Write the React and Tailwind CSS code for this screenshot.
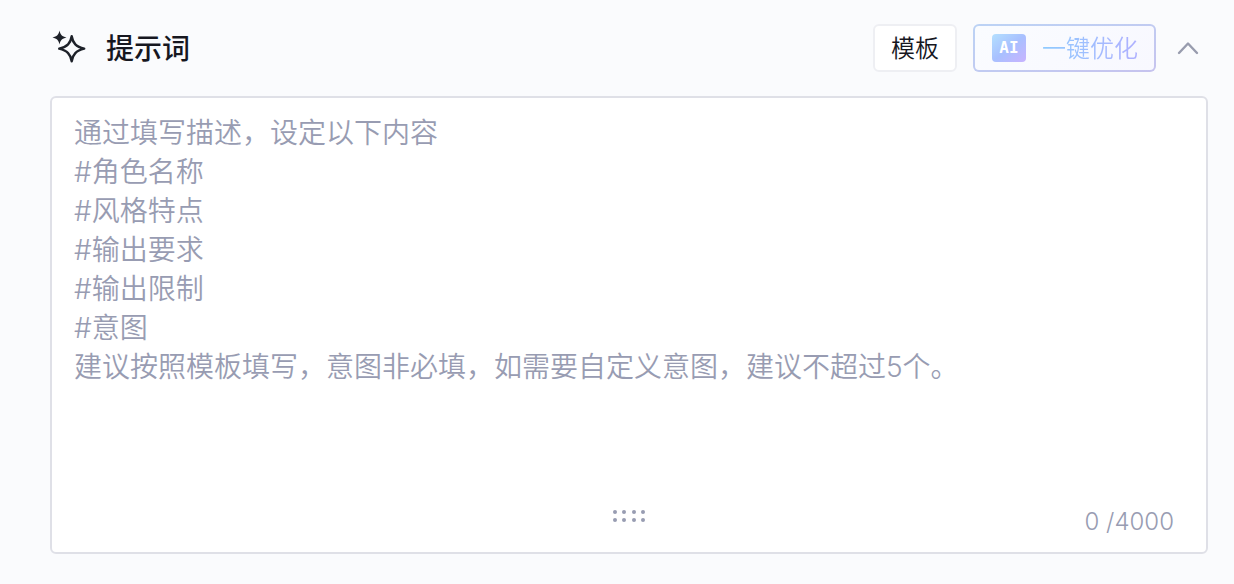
import React, { useState } from 'react';

const MAX_LENGTH = 4000;

const PLACEHOLDER = [
  '通过填写描述，设定以下内容',
  '#角色名称',
  '#风格特点',
  '#输出要求',
  '#输出限制',
  '#意图',
  '建议按照模板填写，意图非必填，如需要自定义意图，建议不超过5个。',
].join('\n');

function SparkleIcon() {
  return (
    <svg className="w-9 h-9" viewBox="-1 0 36 36" fill="none" aria-hidden="true">
      <path
        d="M20.7 6.2C21.9 13.2 25 16.6 33.2 18.7C25 20.8 21.9 24.2 20.7 31.2C19.5 24.2 16.4 20.8 8.2 18.7C16.4 16.6 19.5 13.2 20.7 6.2Z"
        stroke="#1d2129"
        strokeWidth="2.4"
        strokeLinejoin="round"
      />
      <path
        d="M8.5 0.5C9.4 4.8 11 6.5 15.5 7.5C11 8.5 9.4 10.2 8.5 14.5C7.6 10.2 6 8.5 1.5 7.5C6 6.5 7.6 4.8 8.5 0.5Z"
        fill="#1d2129"
      />
    </svg>
  );
}

function ResizeGrip() {
  return (
    <svg className="w-9 h-4" viewBox="0 0 36 16" fill="#989cb2" aria-hidden="true">
      {[4, 13, 23, 32].map((x) => (
        <React.Fragment key={x}>
          <circle cx={x} cy="4" r="2" />
          <circle cx={x} cy="12" r="2" />
        </React.Fragment>
      ))}
    </svg>
  );
}

export default function App() {
  const [prompt, setPrompt] = useState('');
  const [open, setOpen] = useState(true);

  return (
    <div className="min-h-screen bg-[#fafbfd] pt-6 pl-[50px] pr-[26px] font-[Inter,'Noto_Sans_CJK_SC',sans-serif]">
      <div className="flex items-center justify-between mb-6">
        <div className="flex items-center gap-5">
          <SparkleIcon />
          <label htmlFor="prompt" className="pt-0.5 text-[28px] leading-10 font-medium text-[#16171f]">
            提示词
          </label>
        </div>

        <div className="flex items-center gap-4">
          <button
            type="button"
            className="h-12 px-4 pt-0.5 bg-white border-2 border-[#eeeff3] rounded-md text-2xl font-[350] text-[#16171f]"
          >
            模板
          </button>
          <button
            type="button"
            className="h-12 pl-[17px] pr-4 flex items-center gap-4 border-2 border-transparent rounded-md text-2xl font-[350] [background:linear-gradient(135deg,#fafcff,#f8f8ff)_padding-box,linear-gradient(165deg,#bcd3f5,#c6c3ee)_border-box]"
          >
            <span className="w-[34px] h-7 flex items-center justify-center rounded bg-linear-to-br from-[#b4e0ff] via-[#a8c0ff] to-[#c8b3ff] text-white text-base font-bold font-['DejaVu_Sans_Mono',monospace]">
              AI
            </span>
            <span className="pt-0.5 bg-linear-to-r from-[#8fcbff] to-[#afb0ff] bg-clip-text text-transparent">
              一键优化
            </span>
          </button>
          <button
            type="button"
            aria-label="收起"
            aria-expanded={open}
            onClick={() => setOpen(!open)}
            className="w-8 h-8 mr-1 flex items-center justify-center"
          >
            <svg className="w-6 h-6" viewBox="0 0 24 24" fill="none" aria-hidden="true">
              <path
                d="M3 17L12 7.5L21 17"
                stroke="#989cae"
                strokeWidth="2.4"
                strokeLinecap="round"
                strokeLinejoin="round"
              />
            </svg>
          </button>
        </div>
      </div>

      {open && (
        <div className="relative">
          <textarea
            id="prompt"
            rows={11}
            maxLength={MAX_LENGTH}
            value={prompt}
            onChange={(e) => setPrompt(e.target.value)}
            placeholder={PLACEHOLDER}
            className="block w-full resize-none bg-white border-2 border-[#dfe0e7] rounded-md pt-4 pb-[9px] px-[22px] text-[28px] leading-[39px] font-[350] text-[#16171f] placeholder:text-[#989cb2] outline-none focus:border-[#b9d3f8]"
          />
          <div className="absolute bottom-[30px] left-1/2 -translate-x-1/2">
            <ResizeGrip />
          </div>
          <span className="absolute bottom-4 right-[34px] text-2xl font-[350] text-[#989cb2]">
            {prompt.length} /{MAX_LENGTH}
          </span>
        </div>
      )}
    </div>
  );
}
